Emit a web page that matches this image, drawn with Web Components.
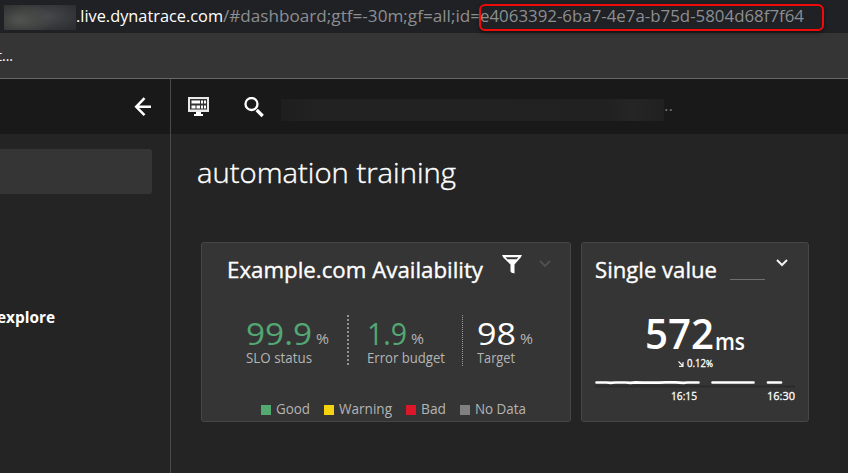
<!DOCTYPE html>
<html lang="en">
<head>
<meta charset="utf-8">
<title>automation training</title>
<style>
html,body{margin:0;height:100%;overflow:hidden;background:#242424}
body{font-family:"Open Sans","Noto Sans",sans-serif;color:#fff}
</style>
</head>
<body>
<dashboard-app></dashboard-app>
<script>
const define = (name, html, ready) => customElements.define(name, class extends HTMLElement {
  constructor() {
    super();
    const t = document.createElement('template');
    t.innerHTML = html;
    this.attachShadow({ mode: 'open' }).append(t.content.cloneNode(true));
  }
  connectedCallback() { if (ready) ready(this, this.shadowRoot); }
});

/* Text set to a fixed measure: w = width, s = font size */
define('fit-text', `<style>
:host{display:block;flex:none;white-space:pre;line-height:1}
span{display:inline-block;transform-origin:0 50%;vertical-align:top}
</style><span><slot></slot></span>`, (el, root) => {
  const w = +el.getAttribute('w');
  el.style.fontSize = el.getAttribute('s') + 'px';
  const span = root.querySelector('span');
  el.style.width = 'max-content';
  const natural = span.getBoundingClientRect().width;
  el.style.width = w + 'px';
  if (natural) span.style.transform = `scaleX(${w / natural})`;
});

define('address-bar', `<style>
:host{display:flex;height:33px;box-sizing:border-box;background:#202124;padding:7px 0 0 4px;color:#8c8f92}
.mask{width:72px;height:25px;margin:-2px 0 0;flex:none;background:radial-gradient(ellipse 34px 20px at 22% 60%,#51544f,transparent),radial-gradient(ellipse 38px 18px at 62% 45%,#45474a,transparent),#2b2c2f}
.host{color:#fff}
.id{position:relative}
.ring{position:absolute;left:-1px;top:-3px;width:341px;height:23px;border:2px solid #f00b0b;border-radius:6px;box-shadow:0 2px 4px #0006}
</style><div class="mask"></div>
<fit-text class="host" w="147" s="17">.live.dynatrace.com</fit-text>
<fit-text w="257" s="17">/#dashboard;gtf=-30m;gf=all;id=</fit-text>
<div class="id"><fit-text w="324" s="17">e4063392-6ba7-4e7a-b75d-5804d68f7f64</fit-text><div class="ring"></div></div>`);

define('bookmark-bar', `<style>
:host{display:flex;height:46px;box-sizing:border-box;background:#353535;border-bottom:1px solid #686868;padding-top:15px}
fit-text{margin-left:-3px}
</style><fit-text w="16" s="15">t...</fit-text>`);

define('side-nav', `<style>
:host{display:flex;flex-direction:column;width:170px;border-right:1px solid #4a4a4a;overflow:hidden;flex:none}
.top{height:55px;background:#191919;display:flex;justify-content:flex-end;box-sizing:border-box;padding:18px 18px 0 0}
.sel{width:152px;height:45px;margin-top:15px;background:#353535;border-radius:0 3px 3px 0}
fit-text{margin:115px 0 0 -3px;font-weight:700}
</style><div class="top"><svg width="18" height="20" fill="none" stroke="#fff" stroke-width="2.5"><path d="M10.500 1.200 2.200 9.800l8.300 8.300M2.200 9.800H17"/></svg></div>
<div class="sel"></div><fit-text w="58" s="16">explore</fit-text>`);

define('tool-bar', `<style>
:host{display:flex;height:55px;background:#191919}
svg{flex:none}
.crumb{width:383px;height:22px;margin:20px 0 0 17px;background:linear-gradient(90deg,#1e1e1e,#222 10%,#212121 85%,#252525 92%,#202020)}
fit-text{margin:19px 0 0 0;color:#777}
</style>
<svg width="21" height="19" style="margin:18px 0 0 17px"><path d="M0 0h21v15H0z" fill="#e8e8e8"/><path d="M2 2h17v10.500H2z" fill="#333"/><path d="M3.500 3.500h8.500v3H3.500zM13 3.500h2v3h-2zM16 3.500h2v3h-2zM3.500 8.500h4v3h-4zM8.500 8.500h3.500v3H8.500zM13 8.500h2v3h-2zM16 8.500h2v3h-2z" fill="#fff"/><path d="M8 15h5v2h2v2H6v-2h2z" fill="#fff"/></svg>
<svg width="21" height="21" style="margin:18px 0 0 34px" fill="none" stroke="#fff"><circle cx="8.500" cy="7" r="6" stroke-width="2.300"/><path d="m13.700 13 6 6" stroke-width="3.200"/></svg>
<div class="crumb"></div><fit-text w="9" s="15">..</fit-text>`);

define('dash-tile', `<style>
:host{display:block;box-sizing:border-box;height:180px;background:#353535;border:1px solid #464646;border-radius:3px;flex:none}
header{display:flex;height:64px;box-sizing:border-box;padding-top:16px;-webkit-text-stroke:.35px currentColor}
</style><header><slot name="head"></slot></header><slot></slot>`);

/* One metric column, built from its attributes */
define('slo-column', `<style>
:host{display:block;height:52px;box-sizing:border-box;padding-top:2px;flex:none}
.v{display:flex;height:34px}
.l,.p{color:#b4b4b4}
.p{margin:15px 0 0 4px}
.n{color:var(--value,#fff);margin-top:1px}
</style><div class="v"></div><div class="l"></div>`, (el, root) => {
  const a = k => el.getAttribute(k);
  root.querySelector('.v').innerHTML = `<fit-text class="n" w="${a('vw')}" s="30.500">${a('value')}</fit-text><fit-text class="p" w="13" s="14">%</fit-text>`;
  root.querySelector('.l').innerHTML = `<fit-text w="${a('lw')}" s="14">${a('label')}</fit-text>`;
});

define('legend-item', `<style>
:host{display:flex;gap:5px;color:#b4b4b4;flex:none}
i{width:10px;height:10px;margin-top:3px;background:var(--c)}
</style><i></i><slot></slot>`);

define('slo-tile', `<style>
dash-tile{width:370px}
.title{margin-left:25px}
.row{display:flex;height:52px;margin:8px 0 0 44px}
.sep{height:52px;flex:none}
.a{width:2px;margin:0 18px 0 18px;background:repeating-linear-gradient(#929292 0 2px,transparent 2px 4px)}
.b{width:1px;margin:0 14px 0 17px;background:repeating-linear-gradient(#9a9a9a 0 1px,transparent 1px 2px)}
.legend{display:flex;gap:14px;margin:35px 0 0 59px}
</style>
<dash-tile>
<fit-text slot="head" class="title" w="256" s="21.500">Example.com Availability</fit-text>
<svg slot="head" width="20" height="19" style="margin:-4px 0 0 19px;flex:none"><path d="M0 0h20l-1.300 2.600-6.200 7v8.800l-1.500-.4h-1l-1.500-1.500V9.600L1.300 2.600z" fill="#fff"/><path d="M3.600 2.200h12.800l-1.700 2H5.300z" fill="#353535"/></svg>
<svg slot="head" width="12" height="8" style="margin:1px 0 0 17px;flex:none" fill="none" stroke="#4f4f4f" stroke-width="2"><path d="m1 1 5 5 5-5"/></svg>
<div class="row">
<slo-column value="99.9" vw="66" label="SLO status" lw="66" style="--value:#52a772"></slo-column><div class="sep a"></div>
<slo-column value="1.9" vw="40" label="Error budget" lw="78" style="--value:#52a772"></slo-column><div class="sep b"></div>
<slo-column value="98" vw="39" label="Target" lw="38"></slo-column>
</div>
<div class="legend">
<legend-item style="--c:#52aa70"><fit-text w="34" s="14">Good</fit-text></legend-item>
<legend-item style="--c:#f5d30f"><fit-text w="53" s="14">Warning</fit-text></legend-item>
<legend-item style="--c:#dc172a"><fit-text w="25" s="14">Bad</fit-text></legend-item>
<legend-item style="--c:#808080"><fit-text w="51" s="14">No Data</fit-text></legend-item>
</div>
</dash-tile>`);

define('value-tile', `<style>
dash-tile{width:228px}
.title{margin-left:13px}
.u{width:35px;height:1px;background:#707070;margin:20px 0 0 13px;flex:none}
.big{display:flex;height:45px;margin:5px 0 0 63px;font-weight:600}
.ms{margin:18px 0 0 1px}
.delta{display:flex;height:18px;padding-left:96px;-webkit-text-stroke:.3px currentColor}
.chart{display:block;margin:5px 0 0 13px}
.axis{display:flex;margin:2px 0 0 89px;gap:70px;-webkit-text-stroke:.3px currentColor}
</style>
<dash-tile>
<fit-text slot="head" class="title" w="122" s="21.500">Single value</fit-text><div slot="head" class="u"></div>
<svg slot="head" width="12" height="8" style="margin:0 0 0 11px;flex:none" fill="none" stroke="#f2f2f2" stroke-width="2"><path d="m1 1 5 5 5-5"/></svg>
<div class="big"><fit-text w="69" s="42">572</fit-text><fit-text class="ms" w="30" s="23">ms</fit-text></div>
<div class="delta"><svg width="6" height="6" style="margin:4px 3px 0 0" fill="none" stroke="#eee" stroke-width="1.200"><path d="m.5.5 4.500 4.500M5 1v4.300H1"/></svg><fit-text w="19" s="11">0.12</fit-text><fit-text w="7" s="9" style="margin-top:2px">%</fit-text></div>
<svg class="chart" width="201" height="8"><path d="M0 6.500h200" stroke="#292929" stroke-width="1.400"/><path d="M1.500 2.500h10l4 .4 5-.4h10l5 .3 5-.5 7 .4h17l6-.4h10l8 .5 4-.3h11M117.500 2.500h41M173 2.500h13" fill="none" stroke="#fff" stroke-width="2.700" stroke-linecap="round"/></svg>
<div class="axis"><fit-text w="26" s="11.500">16:15</fit-text><fit-text w="28" s="11.500">16:30</fit-text></div>
</dash-tile>`);

define('dashboard-app', `<style>
:host{display:flex;flex-direction:column;width:848px;height:473px;overflow:hidden}
.body{display:flex;flex:1;background:#242424}
main{flex:1}
.name{margin:13px 0 0 26px;font-weight:300;-webkit-text-stroke:.4px currentColor}
.tiles{display:flex;gap:10px;margin:54px 0 0 30px}
</style>
<address-bar></address-bar><bookmark-bar></bookmark-bar>
<div class="body"><side-nav></side-nav><main><tool-bar></tool-bar>
<fit-text class="name" w="259" s="28" style="padding:11px 0 2px">automation training</fit-text>
<div class="tiles"><slo-tile></slo-tile><value-tile></value-tile></div></main></div>`);
</script>
</body>
</html>
